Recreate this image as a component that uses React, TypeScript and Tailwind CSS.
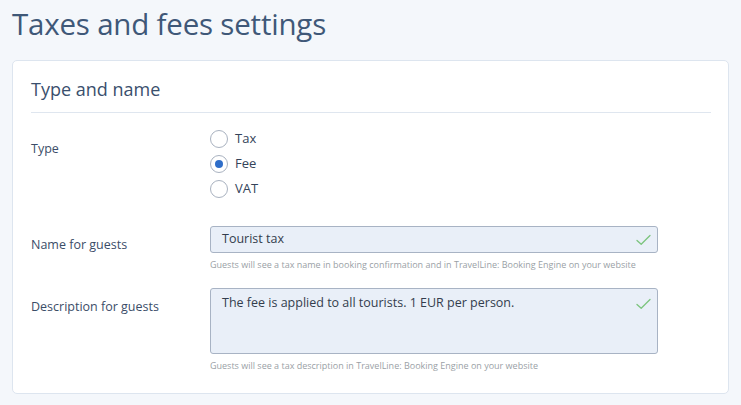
import { useState } from "react";

const font = { fontFamily: '"Open Sans", "Noto Sans", sans-serif' };

function Check() {
  return (
    <svg className="w-[15px] h-[12px]" viewBox="0 0 15 12" fill="none">
      <path d="M1 6.5l4.2 3.8L14 1.5" stroke="#7cc47e" strokeWidth={1.3} strokeLinecap="round" strokeLinejoin="round" />
    </svg>
  );
}

function Radio({ label, checked, onClick }: { label: string; checked: boolean; onClick: () => void }) {
  return (
    <button onClick={onClick} className="flex items-center gap-[7px] h-[25px] text-left">
      <span className="w-[18px] h-[18px] rounded-full border border-[#a9b2c0] bg-white flex items-center justify-center">
        {checked && <span className="w-[8px] h-[8px] rounded-full bg-[#2f6ec9]" />}
      </span>
      <span className="text-[13px] text-[#34435a]">{label}</span>
    </button>
  );
}

export default function App() {
  const [type, setType] = useState("Fee");

  return (
    <div style={font} className="min-h-screen bg-[#f4f7fb] px-3 pt-[4px] pb-3">
      <h1 className="text-[29.5px] leading-[40px] text-[#3f5878] tracking-[-0.2px]">Taxes and fees settings</h1>

      <div className="mt-[16px] bg-white border border-[#dde5ef] rounded-[5px] pl-[18px] pr-[17px] pt-[15px] pb-[21px]">
        <h2 className="text-[18px] leading-[26px] text-[#3a4f6d]">Type and name</h2>
        <div className="mt-[10px] border-t border-[#dfe6ef]" />

        <div className="grid grid-cols-[179px_1fr] mt-[13px]">
          <div className="text-[12.5px] text-[#3b4d68] pt-[14px]">Type</div>
          <div className="flex flex-col">
            {["Tax", "Fee", "VAT"].map((t) => (
              <Radio key={t} label={t} checked={type === t} onClick={() => setType(t)} />
            ))}
          </div>

          <div className="text-[12.5px] text-[#3b4d68] mt-[25px] pt-[10px]">Name for guests</div>
          <div className="mt-[25px]">
            <div className="w-[448px] h-[27px] bg-[#e9eff8] border border-[#a8b3c4] rounded-[3px] flex items-center justify-between pl-[11px] pr-[6px]">
              <span className="text-[12.5px] text-[#333d4d]">Tourist tax</span>
              <Check />
            </div>
            <p className="mt-[6px] text-[9px] leading-[12px] text-[#9a9fa6]">
              Guests will see a tax name in booking confirmation and in TravelLine: Booking Engine on your website
            </p>
          </div>

          <div className="text-[12.5px] text-[#3b4d68] mt-[17px] pt-[10px]">Description for guests</div>
          <div className="mt-[17px]">
            <div className="w-[448px] h-[66px] bg-[#e9eff8] border border-[#a8b3c4] rounded-[3px] flex items-start justify-between pl-[11px] pr-[6px] pt-[5px]">
              <span className="text-[12.5px] text-[#333d4d]">The fee is applied to all tourists. 1 EUR per person.</span>
              <span className="pt-[4px]"><Check /></span>
            </div>
            <p className="mt-[6px] text-[9px] leading-[12px] text-[#9a9fa6]">
              Guests will see a tax description in TravelLine: Booking Engine on your website
            </p>
          </div>
        </div>
      </div>
    </div>
  );
}
